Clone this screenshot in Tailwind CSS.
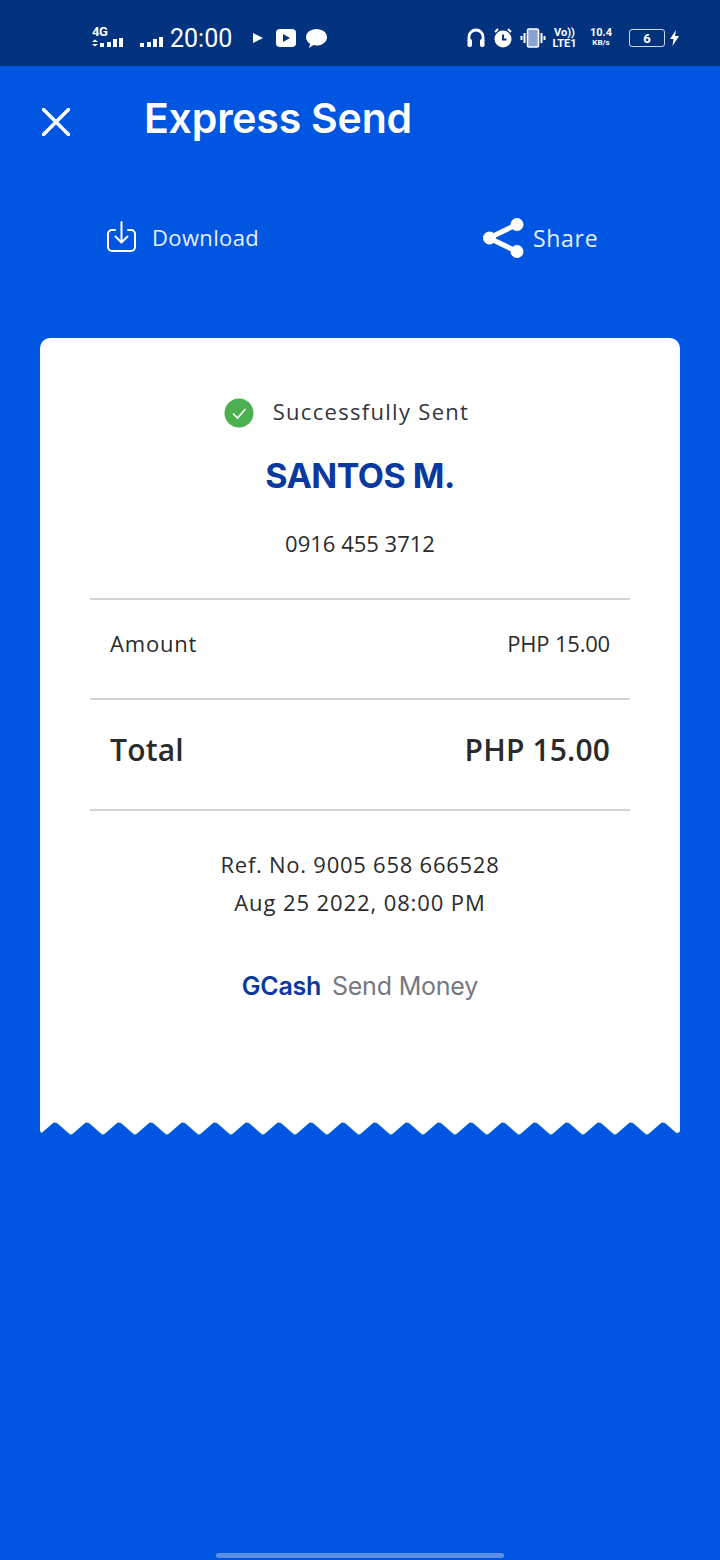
<!DOCTYPE html>
<html lang="en">
<head>
    <meta charset="UTF-8">
    <meta name="viewport" content="width=device-width, initial-scale=1.0">
    <title>Express Send</title>
    <script src="https://cdn.jsdelivr.net/npm/@tailwindcss/browser@4"></script>
</head>
<body class="w-[720px] h-[1560px] overflow-hidden bg-[#0056e0] font-['Open_Sans',sans-serif] text-white relative">

    <!-- status bar -->
    <div class="h-[66px] bg-[#03327f] flex items-center pl-[91px] pr-[40px] pt-[10px] font-['Roboto',sans-serif]">
        <div class="relative w-[34px] h-[24px]">
            <span class="absolute left-[1px] top-[-1px] text-[13px] font-bold leading-[14px] tracking-[-0.5px]">4G</span>
            <svg class="absolute left-0 top-0" width="34" height="24" fill="#fff">
                <path d="M1 16l3-2.500l3 2.500zM1 18l3 2.500l3-2.500z"/>
                <rect x="9" y="17" width="4" height="4"/><rect x="16" y="16" width="4" height="5"/><rect x="22" y="13" width="4" height="8"/><rect x="28" y="12" width="4" height="9"/>
            </svg>
        </div>
        <svg class="ml-[15px] mt-[6px]" width="24" height="14" fill="#fff">
            <rect x="0" y="9" width="4" height="4"/><rect x="7" y="8" width="4" height="5"/><rect x="13" y="5" width="4" height="8"/><rect x="19" y="3" width="4" height="10"/>
        </svg>
        <span class="ml-[6px] text-[25px] leading-none">20:00</span>
        <svg class="ml-[20px]" width="12" height="12" fill="#fff"><path d="M1 1l10 5l-10 5z"/></svg>
        <svg class="ml-[12px]" width="20" height="18"><rect width="20" height="18" rx="4" fill="#fff"/><path d="M7 5l7 4l-7 4z" fill="#03327f"/></svg>
        <svg class="ml-[10px]" width="21" height="19" fill="#fff"><path d="M10.500 0c5.800 0 10.500 3.600 10.500 8.200s-4.700 8.300-10.500 8.300c-1 0-2-.1-3-.4l-4.500 2.900 1-4.400c-2.500-1.500-4-3.800-4-6.400 0-4.600 4.700-8.200 10.500-8.200z"/></svg>

        <div class="ml-auto flex items-center">
            <svg width="18" height="20" fill="none" stroke="#fff" stroke-width="2.800"><path d="M2 13v-4a7 7 0 0 1 14 0v4"/><rect x="1" y="11.500" width="3.500" height="7" rx="1" fill="#fff" stroke-width="1"/><rect x="13.500" y="11.500" width="3.500" height="7" rx="1" fill="#fff" stroke-width="1"/></svg>
            <svg class="ml-[8px]" width="20" height="20"><circle cx="10" cy="11" r="8.500" fill="#fff"/><path d="M2 4l3-3M18 4l-3-3" stroke="#fff" stroke-width="2"/><path d="M10 6.500v5h3.500" fill="none" stroke="#03327f" stroke-width="2"/></svg>
            <svg class="ml-[7px]" width="26" height="20" fill="none"><rect x="7.500" y="1" width="11" height="18" rx="1.500" fill="#8ba3d4" stroke="#fff" stroke-width="1.600"/><path d="M4.500 5v10M1.500 8v4M21.500 5v10M24.500 8v4" stroke="#fff" stroke-width="2"/></svg>
            <div class="ml-[6px] w-[25px] flex flex-col items-center text-[11px] font-bold leading-[11px]"><span>Vo))</span><span>LTE1</span></div>
            <div class="ml-[10px] w-[28px] flex flex-col items-center font-bold leading-[10px]"><span class="text-[11px]">10.4</span><span class="text-[8px]">KB/s</span></div>
            <div class="ml-[14px] w-[36px] h-[18px] rounded-[3px] border-[1.500px] border-white/80 flex items-center justify-center text-[13px] font-bold leading-none">6</div>
            <svg class="ml-[5px]" width="10" height="16" fill="#fff"><path d="M6 0l-6 9h3.500l-1 7 6.500-10h-4z"/></svg>
        </div>
    </div>

    <!-- title row -->
    <div class="h-[104px] flex items-start">
        <svg class="ml-[42px] mt-[42px]" width="28" height="28" fill="none" stroke="#fff" stroke-width="3.600" stroke-linecap="round"><path d="M1.500 1.500l25 25M26.500 1.500l-25 25"/></svg>
        <h1 class="ml-[74px] mt-[27px] text-[41px] leading-[50px] font-semibold font-['Inter',sans-serif] tracking-[-0.2px]">Express Send</h1>
    </div>

    <!-- actions -->
    <div class="h-[168px] flex items-start">
        <div class="ml-[107px] w-[376px] mt-[50px] flex items-center">
            <svg width="30" height="36" fill="none" stroke="#fff" stroke-width="2" stroke-linecap="round" stroke-linejoin="round"><path d="M8 10h-3a4 4 0 0 0-4 4v13a4 4 0 0 0 4 4h19a4 4 0 0 0 4-4v-13a4 4 0 0 0-4-4h-3"/><path d="M14.500 2v20M8.500 16.500l6 6 6-6"/></svg>
            <span class="ml-[15px] pb-[2px] text-[22px] tracking-[0.35px] text-[#e6f0ff]">Download</span>
        </div>
        <div class="mt-[48px] flex items-center">
            <svg width="41" height="40" fill="#fff" stroke="#fff"><path d="M6 20l28-13.500M6 20l28 13.500" stroke-width="5"/><circle cx="6.500" cy="20" r="6.500" stroke="none"/><circle cx="34" cy="6.500" r="6.500" stroke="none"/><circle cx="34" cy="33.500" r="6.500" stroke="none"/></svg>
            <span class="ml-[9px] text-[23px] tracking-[0.7px] text-[#e6f0ff]">Share</span>
        </div>
    </div>

    <!-- receipt -->
    <div class="mx-[40px] w-[640px]">
        <div class="bg-white rounded-t-[10px] h-[784px] px-[50px] text-[#2b2b2b] text-center">
            <div class="h-[150px] flex flex-col items-center">
                <div class="mt-[59px] mr-[27px] h-[32px] flex items-center justify-center">
                    <svg width="30" height="30"><circle cx="15" cy="15" r="14.500" fill="#4caf50"/><path d="M9 15.500l4.500 4.500 8-9" fill="none" stroke="#fff" stroke-width="1.600"/></svg>
                    <span class="ml-[19px] pb-[4px] text-[22px] tracking-[1.300px] text-[#33353c]">Successfully Sent</span>
                </div>
                <div class="mt-[22px] text-[34px] leading-[50px] font-bold font-['Inter',sans-serif] tracking-[-0.5px] text-[#0a3aa0]">SANTOS M.</div>
                <div class="mt-[27px] text-[22px] leading-[30px]">0916 455 3712</div>
            </div>
            <div class="mt-[110px] border-t-2 border-[#d4d4d4] h-[100px] px-[20px] flex items-center justify-between text-[22px] pb-[12px]">
                <span class="tracking-[0.8px]">Amount</span>
                <span class="tracking-[-0.2px]">PHP 15.00</span>
            </div>
            <div class="border-t-2 border-[#d4d4d4] h-[111px] px-[20px] flex items-center justify-between text-[30px] font-semibold pb-[10px]">
                <span class="tracking-[0.2px]">Total</span>
                <span class="tracking-[0.15px]">PHP 15.00</span>
            </div>
            <div class="border-t-2 border-[#d4d4d4] pt-[34px] text-[22px] leading-[38px]">
                <div class="tracking-[0.75px]">Ref. No. 9005 658 666528</div>
                <div class="tracking-[0.9px]">Aug 25 2022, 08:00 PM</div>
            </div>
            <div class="mt-[48px] flex justify-center items-center text-[25px] font-['Inter',sans-serif] leading-[34px]">
                <span class="font-semibold text-[#0a3aa0] tracking-[-0.3px]">GCash</span>
                <span class="ml-[11px] text-[#77787f] tracking-[-0.2px]">Send Money</span>
            </div>
        </div>
        <svg class="block" width="640" height="14" viewBox="0 0 640 14">
            <defs>
                <pattern id="tooth" x="-1" y="0" width="32" height="14" patternUnits="userSpaceOnUse">
                    <path d="M0 12.500Q1 12.500 2 11.500L13.500 1.500Q16 -.5 18.500 1.500L30 11.500Q31 12.500 32 12.500V0H0Z" fill="#fff"/>
                </pattern>
            </defs>
            <rect width="640" height="14" fill="url(#tooth)"/>
            <path d="M0 8Q0 11 3 11L4 12V14H0ZM640 8Q640 11 637 11L636 12V14H640Z" fill="#0056e0"/>
        </svg>
    </div>

    <!-- home indicator -->
    <div class="absolute left-[216px] bottom-[2px] w-[288px] h-[5px] rounded-full bg-[#5b8fe6]"></div>

</body>
</html>
